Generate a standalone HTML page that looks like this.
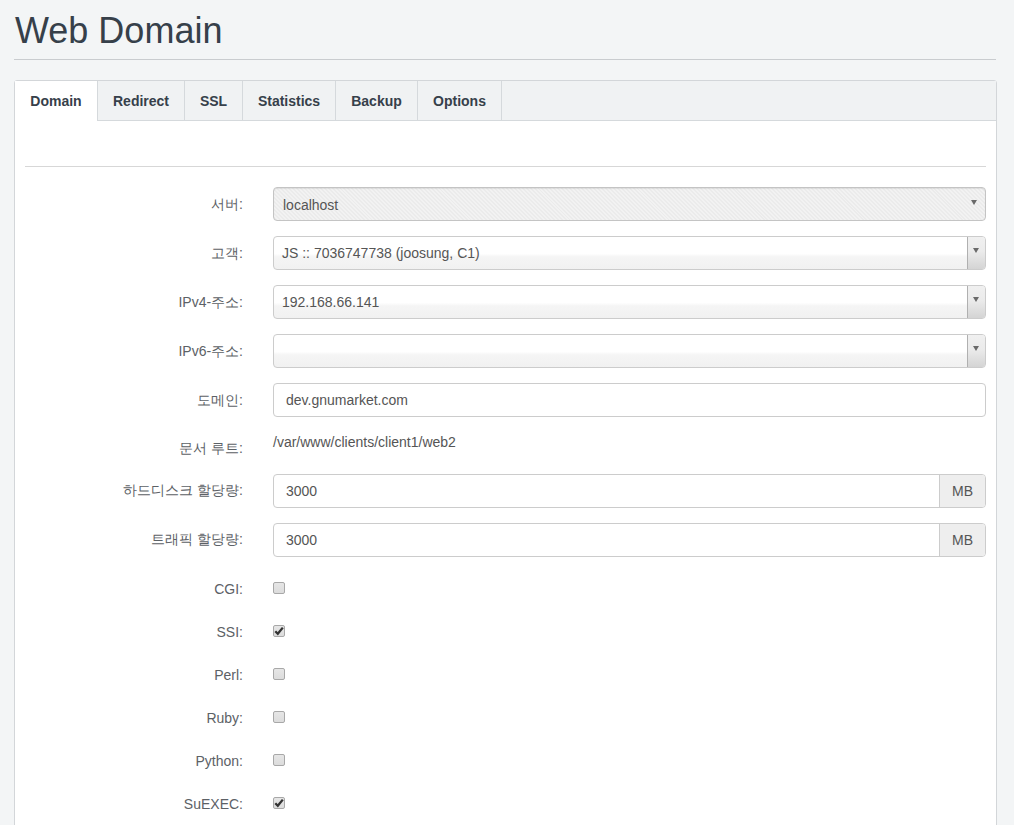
<!DOCTYPE html>
<html><head><meta charset="utf-8">
<style>
*{box-sizing:border-box;margin:0;padding:0}
html,body{width:1014px;height:825px;overflow:hidden}
body{background:#f3f5f6;font-family:"Liberation Sans",sans-serif;color:#3a3f44;position:relative}
.h1{position:absolute;left:15px;top:8px;font-size:36px;line-height:46px;color:#36404a;white-space:nowrap}
.h1line{position:absolute;left:14px;top:59px;width:982px;height:1px;background:#c9cccf}
.panel{position:absolute;left:14px;top:80px;width:983px;height:760px;background:#fff;border:1px solid #d3d6d9;border-radius:3px 3px 0 0}
.tabs{position:absolute;left:0;top:0;width:981px;height:40px;background:#f0f2f3;border-bottom:1px solid #d5d9dc}
.tab{position:absolute;top:0;height:40px;border-right:1px solid #d5d9dc;font-weight:bold;font-size:14px;line-height:40px;text-align:center;color:#36404a}
.tab.active{background:#fff;height:40px}
.hr{position:absolute;left:10px;top:85px;width:961px;height:1px;background:#d7d7d7}
.lbl{position:absolute;right:753px;font-size:14px;color:#5c6166;white-space:nowrap;text-align:right}
.inp{position:absolute;left:258px;width:713px;height:34px;border:1px solid #ccc;border-radius:4px;background:#fff;font-size:14px;color:#555;padding-left:12px;line-height:32px;white-space:nowrap}
.sel{background:linear-gradient(#fff 0,#fff 52%,#f5f5f5 62%,#f1f1f1 100%);padding-left:8px}
.sel.dis{background:repeating-linear-gradient(45deg,#f2f2f2 0,#f2f2f2 1.4px,#ebebeb 1.4px,#ebebeb 2.8px);padding-left:9px;line-height:35px;box-shadow:inset 0 1px 1px rgba(0,0,0,.08);border-color:#c4c4c4}
.arr{position:absolute;right:0;top:0;width:18px;height:32px;border-left:1px solid #b0b0b0;border-radius:0 3px 3px 0;background:linear-gradient(#f0f0f0 0,#ebebeb 45%,#d4d4d4 100%)}
.arr:after{content:"";position:absolute;left:5px;top:11px;border-left:3.5px solid transparent;border-right:3.5px solid transparent;border-top:5px solid #6a6a6a}
.dis .arr{border-left:none;background:none}
.dis .arr:after{left:4px;top:12px}
.addon{position:absolute;right:0;top:0;width:46px;height:32px;border-left:1px solid #ccc;background:#eee;border-radius:0 3px 3px 0;text-align:center;color:#555}
.cb{position:absolute;left:258px;width:12px;height:12px;border:1px solid #a8a8a8;border-radius:2px;background:linear-gradient(#e6e6e6,#dcdcdc)}
.cb svg{position:absolute;left:-1px;top:-1px}
.txt{position:absolute;left:258px;font-size:14px;color:#555;white-space:nowrap}
</style></head><body>
<div class="h1">Web Domain</div>
<div class="h1line"></div>
<div class="panel">
  <div class="tabs">
    <div class="tab active" style="left:0;width:83px">Domain</div>
    <div class="tab" style="left:83px;width:87px">Redirect</div>
    <div class="tab" style="left:170px;width:58px">SSL</div>
    <div class="tab" style="left:228px;width:93px">Statistics</div>
    <div class="tab" style="left:321px;width:82px">Backup</div>
    <div class="tab" style="left:403px;width:84px">Options</div>
  </div>
  <div class="hr"></div>

  <div class="lbl" style="top:115px">서버:</div>
  <div class="inp sel dis" style="top:106px">localhost<div class="arr"></div></div>

  <div class="lbl" style="top:164px">고객:</div>
  <div class="inp sel" style="top:155px">JS :: 7036747738 (joosung, C1)<div class="arr"></div></div>

  <div class="lbl" style="top:213px">IPv4-주소:</div>
  <div class="inp sel" style="top:204px">192.168.66.141<div class="arr"></div></div>

  <div class="lbl" style="top:262px">IPv6-주소:</div>
  <div class="inp sel" style="top:253px"><div class="arr"></div></div>

  <div class="lbl" style="top:311px">도메인:</div>
  <div class="inp" style="top:302px">dev.gnumarket.com</div>

  <div class="lbl" style="top:359px">문서 루트:</div>
  <div class="txt" style="top:353px">/var/www/clients/client1/web2</div>

  <div class="lbl" style="top:401px">하드디스크 할당량:</div>
  <div class="inp" style="top:393px">3000<div class="addon">MB</div></div>

  <div class="lbl" style="top:450px">트래픽 할당량:</div>
  <div class="inp" style="top:442px">3000<div class="addon">MB</div></div>

  <div class="lbl" style="top:500px">CGI:</div>
  <div class="cb" style="top:501px"></div>
  <div class="lbl" style="top:543px">SSI:</div>
  <div class="cb" style="top:544px"><svg width="12" height="12" viewBox="0 0 12 12"><path d="M2.3 6.3 L4.8 8.8 L9.8 2.6" fill="none" stroke="#333" stroke-width="2.3"/></svg></div>
  <div class="lbl" style="top:586px">Perl:</div>
  <div class="cb" style="top:587px"></div>
  <div class="lbl" style="top:629px">Ruby:</div>
  <div class="cb" style="top:630px"></div>
  <div class="lbl" style="top:672px">Python:</div>
  <div class="cb" style="top:673px"></div>
  <div class="lbl" style="top:715px">SuEXEC:</div>
  <div class="cb" style="top:716px"><svg width="12" height="12" viewBox="0 0 12 12"><path d="M2.3 6.3 L4.8 8.8 L9.8 2.6" fill="none" stroke="#333" stroke-width="2.3"/></svg></div>
</div>
</body></html>
